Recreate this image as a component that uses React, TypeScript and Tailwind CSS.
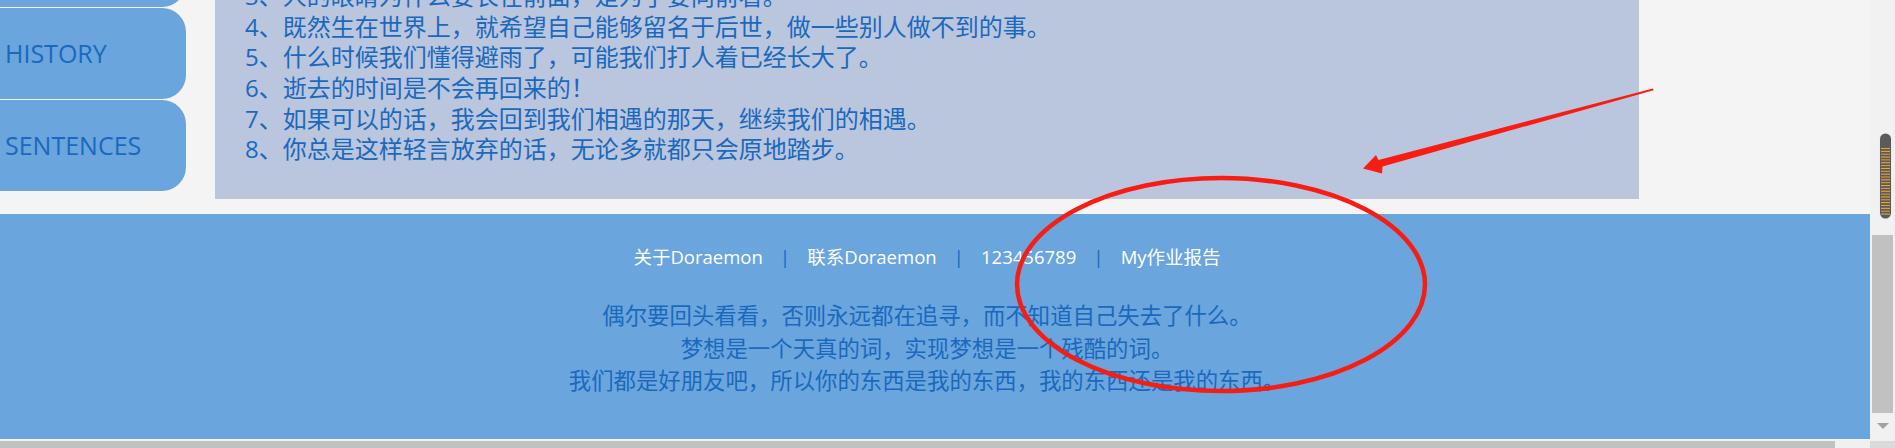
import React from "react";

const panelLines = [
  "3、人的眼睛为什么要长在前面，是为了要向前看。",
  "4、既然生在世界上，就希望自己能够留名于后世，做一些别人做不到的事。",
  "5、什么时候我们懂得避雨了，可能我们打人着已经长大了。",
  "6、逝去的时间是不会再回来的！",
  "7、如果可以的话，我会回到我们相遇的那天，继续我们的相遇。",
  "8、你总是这样轻言放弃的话，无论多就都只会原地踏步。",
];

const links = ["关于Doraemon", "联系Doraemon", "123456789", "My作业报告"];

const quotes = [
  "偶尔要回头看看，否则永远都在追寻，而不知道自己失去了什么。",
  "梦想是一个天真的词，实现梦想是一个残酷的词。",
  "我们都是好朋友吧，所以你的东西是我的东西，我的东西还是我的东西。",
];

function NavButton({ label }: { label: string }) {
  return (
    <div className="h-[91px] w-[186px] rounded-r-[24px] bg-[#6aa5de] flex items-center pl-[5px] text-[25px] leading-none text-[#1a69bd]">
      {label}
    </div>
  );
}

function Thumb() {
  const stripes = Array.from({ length: 24 }, (_, i) => 15.5 + i * 2.85);
  return (
    <svg width="13" height="87" viewBox="0 0 13 87">
      <rect x="0.5" y="0.5" width="12" height="86" rx="6" fill="#e9e9e9" />
      <rect x="1" y="0.5" width="11" height="85" rx="5.5" fill="#5b5b5b" />
      {stripes.map((y, i) => (
        <line
          key={i}
          x1="2"
          x2="11"
          y1={y}
          y2={y}
          stroke={i % 2 === 0 ? "#f59f1a" : "#e9ad55"}
          strokeWidth="1"
        />
      ))}
    </svg>
  );
}

export default function App() {
  return (
    <div className="relative w-[1895px] h-[448px] overflow-hidden bg-[#f4f4f4] font-['Open_Sans','Noto_Sans_CJK_SC',sans-serif]">
      <div className="flex h-[440px]">
        {/* main page */}
        <div className="w-[1870px] flex flex-col">
          <div className="h-[199px] overflow-hidden flex items-end">
            <div className="flex flex-col gap-px mb-[8px]">
              <NavButton label="HOME" />
              <NavButton label="HISTORY" />
              <NavButton label="SENTENCES" />
            </div>
            <div className="ml-[29px] w-[1424px] bg-[#bac5de] pl-[30px] pb-[34px] pt-[20px] text-[24px] leading-[30.65px] text-[#1a69bd]">
              {panelLines.map((l) => (
                <div key={l} className="whitespace-nowrap">
                  {l}
                </div>
              ))}
            </div>
          </div>
          <div className="mt-[15px] h-[225px] bg-[#6aa5de] pr-[16px] pt-[30px] flex flex-col items-center">
            <div className="flex items-center h-[26px] text-[18.5px] text-white">
              {links.map((l, i) => (
                <React.Fragment key={l}>
                  {i > 0 && (
                    <span className="mx-[17px] text-[#1a69bd] text-[19px]">|</span>
                  )}
                  <span className="whitespace-nowrap">{l}</span>
                </React.Fragment>
              ))}
            </div>
            <div className="mt-[30px] text-center text-[22.4px] leading-[32.5px] text-[#1a69bd]">
              {quotes.map((q) => (
                <div key={q} className="whitespace-nowrap">
                  {q}
                </div>
              ))}
            </div>
          </div>
        </div>
        {/* vertical scrollbar */}
        <div className="w-[25px] bg-[#f1f1f1] flex flex-col">
          <div className="mt-[133px] ml-[9px] h-[87px]">
            <Thumb />
          </div>
          <div className="mt-[15px] ml-[2px] w-[21px] h-[178px] bg-[#c1c1c1]" />
          <div className="mt-[10px] ml-[7px] w-0 h-0 border-l-[6px] border-r-[6px] border-t-[6px] border-l-transparent border-r-transparent border-t-[#a3a3a3]" />
        </div>
      </div>
      {/* horizontal scrollbar */}
      <div className="flex h-[8px] border-t border-[#f0f0f0]">
        <div className="w-[1835px] bg-[#c1c1c1]" />
        <div className="w-[35px] bg-[#f0f0f0]" />
        <div className="w-[25px] bg-[#dadada]" />
      </div>
      {/* red annotations */}
      <svg
        className="absolute inset-0 pointer-events-none"
        width="1895"
        height="448"
        viewBox="0 0 1895 448"
      >
        <ellipse
          cx="1221"
          cy="284.5"
          rx="204"
          ry="106.5"
          fill="none"
          stroke="#f81d12"
          strokeWidth="4.5"
        />
        <polygon
          points="1363,168.5 1376,155 1378.5,160 1653,88.4 1653.6,90.2 1382.5,166.5 1382,173.5"
          fill="#f81d12"
        />
      </svg>
    </div>
  );
}
